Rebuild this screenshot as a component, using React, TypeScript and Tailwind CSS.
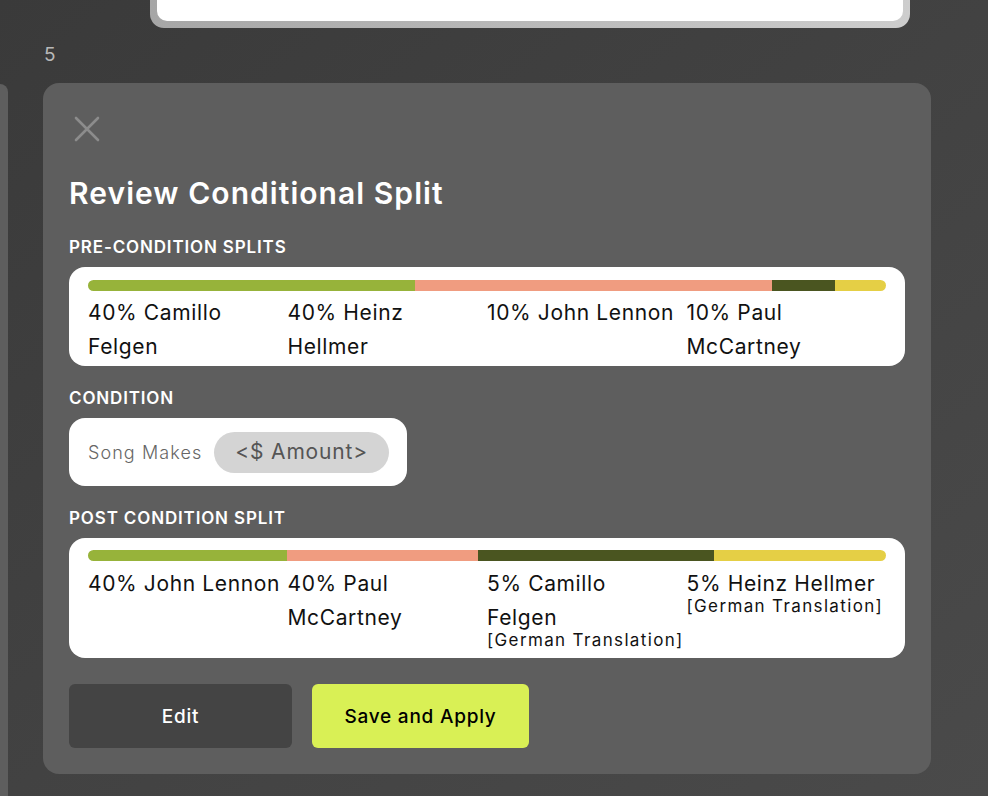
import React from "react";

const FONT = { fontFamily: "Inter, 'Noto Sans', sans-serif" };

type Seg = { w: number; c: string };

function Bar({ segs }: { segs: Seg[] }) {
  return (
    <div className="flex h-[11px] w-[798px] overflow-hidden rounded-full">
      {segs.map((s, i) => (
        <div key={i} className="h-full" style={{ width: s.w, background: s.c }} />
      ))}
    </div>
  );
}

function Label({ children }: { children: React.ReactNode }) {
  return (
    <div className="text-[17px] font-semibold uppercase leading-[24px] tracking-[0.05em] text-white">
      {children}
    </div>
  );
}

function Col({ lines, note }: { lines: string[]; note?: string }) {
  return (
    <div className="w-[200px]">
      {lines.map((l, i) => (
        <div key={i} className="whitespace-nowrap text-[21px] leading-[34px] tracking-[0.03em] text-[#111]">
          {l}
        </div>
      ))}
      {note && (
        <div className="-mt-[5px] whitespace-nowrap text-[17px] leading-[20px] tracking-[0.08em] text-[#111]">
          {note}
        </div>
      )}
    </div>
  );
}

export default function App() {
  return (
    <div
      className="relative h-[796px] w-[988px] overflow-hidden bg-gradient-to-br from-[#3a3a3a] to-[#4a4a4a]"
      style={FONT}
    >
      <div className="flex">
        <div className="mt-[84px] h-[712px] w-[8px] rounded-tr-[14px] bg-[#5e5e5e]" />
        <div className="ml-[35px] w-[888px]">
          <div className="ml-[107px] h-[28px] w-[760px] rounded-b-[14px] bg-gradient-to-r from-[#a6a6a6] to-[#cdcdcd] px-[7px] pb-[7px]">
            <div className="h-full w-full rounded-b-[10px] bg-white" />
          </div>
          <div className="mt-[15px] h-[24px] pl-[1px] text-[19px] leading-[24px] text-[#b8b8b8]">5</div>
          <div className="mt-[16px] h-[691px] w-[888px] rounded-[16px] bg-[#5e5e5e] px-[26px] pt-[33px]">
            <svg width="26" height="26" viewBox="0 0 26 26" className="ml-[5px]">
              <path d="M2 2 L24 24 M24 2 L2 24" stroke="#8c8c8c" strokeWidth="2.6" strokeLinecap="round" />
            </svg>
            <div className="mt-[32px] text-[30px] font-semibold leading-[38px] tracking-[0.035em] text-white">
              Review Conditional Split
            </div>
            <div className="mt-[23px]">
              <Label>Pre-Condition Splits</Label>
            </div>
            <div className="mt-[8px] h-[99px] w-[836px] rounded-[16px] bg-white px-[19px] pt-[13px]">
              <Bar
                segs={[
                  { w: 327, c: "#97b33a" },
                  { w: 357, c: "#f09c80" },
                  { w: 63, c: "#4a5520" },
                  { w: 51, c: "#e5cf45" },
                ]}
              />
              <div className="mt-[5px] flex">
                <Col lines={["40% Camillo", "Felgen"]} />
                <Col lines={["40% Heinz", "Hellmer"]} />
                <Col lines={["10% John Lennon"]} />
                <Col lines={["10% Paul", "McCartney"]} />
              </div>
            </div>
            <div className="mt-[20px]">
              <Label>Condition</Label>
            </div>
            <div className="mt-[8px] flex h-[68px] w-[338px] items-center rounded-[16px] bg-white pl-[19px]">
              <span className="text-[18px] font-light tracking-[0.06em] text-[#666]">Song Makes</span>
              <span className="ml-[12px] flex h-[41px] items-center rounded-full bg-[#d4d4d4] px-[21px] text-[21px] tracking-[0.04em] text-[#555]">
                &lt;$ Amount&gt;
              </span>
            </div>
            <div className="mt-[20px]">
              <Label>Post Condition Split</Label>
            </div>
            <div className="mt-[8px] h-[120px] w-[836px] rounded-[16px] bg-white px-[19px] pt-[12px]">
              <Bar
                segs={[
                  { w: 199, c: "#97b33a" },
                  { w: 191, c: "#f09c80" },
                  { w: 236, c: "#4a5520" },
                  { w: 172, c: "#e5cf45" },
                ]}
              />
              <div className="mt-[6px] flex">
                <Col lines={["40% John Lennon"]} />
                <Col lines={["40% Paul", "McCartney"]} />
                <Col lines={["5% Camillo", "Felgen"]} note="[German Translation]" />
                <Col lines={["5% Heinz Hellmer"]} note="[German Translation]" />
              </div>
            </div>
            <div className="mt-[26px] flex gap-[20px]">
              <button className="flex h-[64px] w-[223px] items-center justify-center rounded-[6px] bg-[#444444] pt-[2px] text-[19px] font-medium tracking-[0.04em] text-white">
                Edit
              </button>
              <button className="flex h-[64px] w-[217px] items-center justify-center rounded-[6px] bg-[#d9f055] pt-[2px] text-[19px] font-medium tracking-[0.04em] text-black">
                Save and Apply
              </button>
            </div>
          </div>
        </div>
      </div>
    </div>
  );
}
